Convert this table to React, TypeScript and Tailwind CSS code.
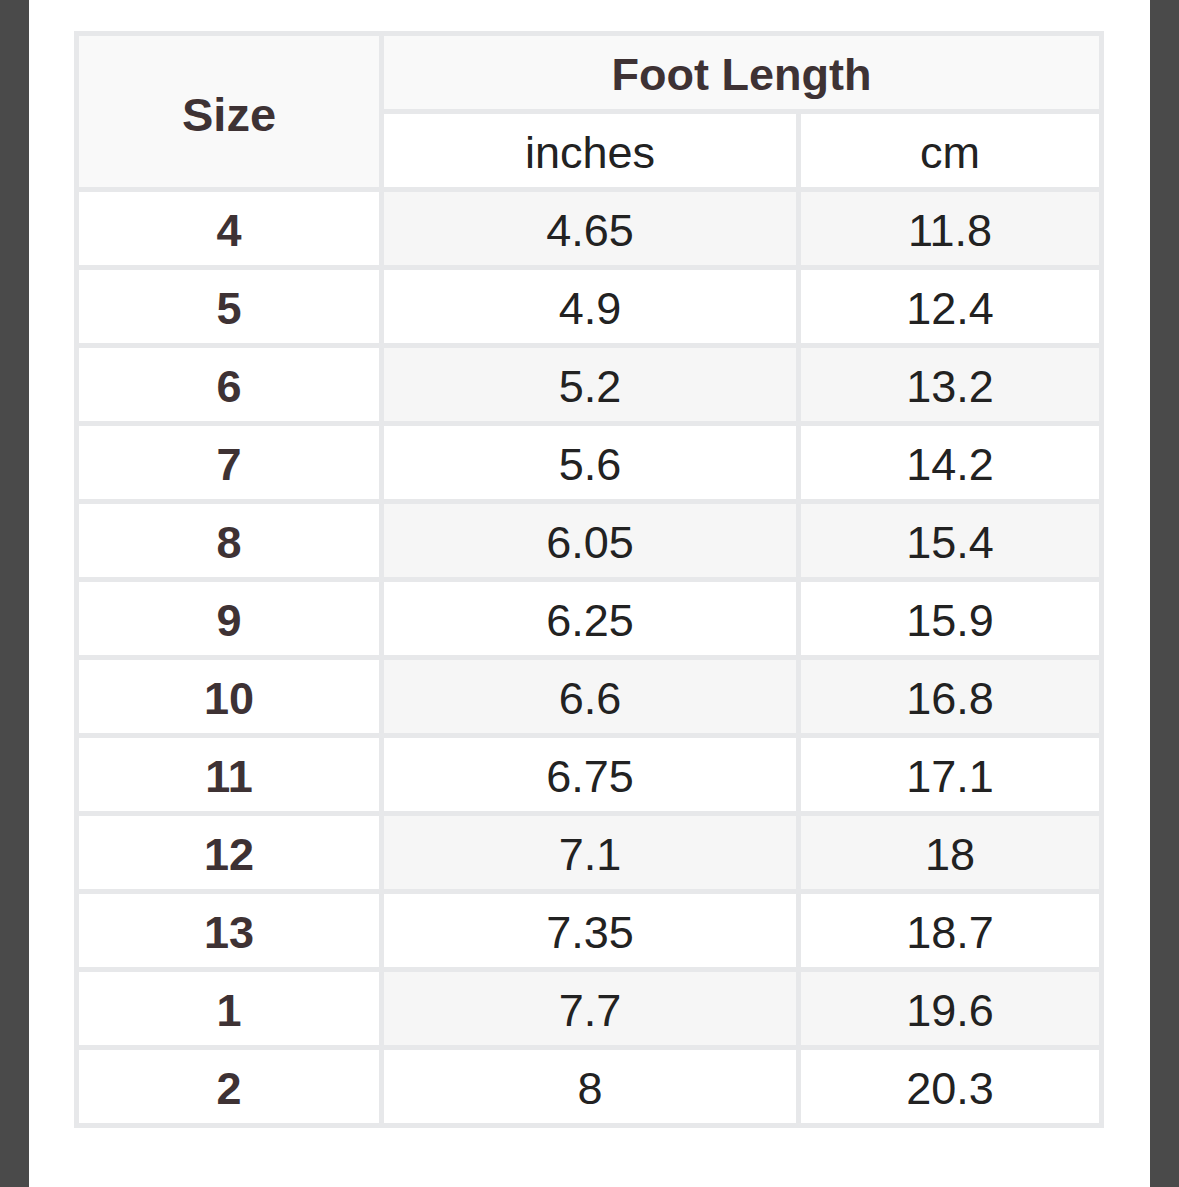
const rows: [string, string, string][] = [
  ["4", "4.65", "11.8"],
  ["5", "4.9", "12.4"],
  ["6", "5.2", "13.2"],
  ["7", "5.6", "14.2"],
  ["8", "6.05", "15.4"],
  ["9", "6.25", "15.9"],
  ["10", "6.6", "16.8"],
  ["11", "6.75", "17.1"],
  ["12", "7.1", "18"],
  ["13", "7.35", "18.7"],
  ["1", "7.7", "19.6"],
  ["2", "8", "20.3"],
];

const cell = "flex items-center justify-center h-[73px] pt-[3px]";

export default function App() {
  return (
    <div className="flex h-[1187px] w-[1179px] font-['Liberation_Sans',Arial,sans-serif]">
      <div className="w-[29px] bg-[#4a4a4a]" />
      <div className="flex-1 bg-white pl-[45px] pt-[31px]">
        <div className="grid w-[1030px] grid-cols-[300px_412px_298px] gap-[5px] bg-[#e7e8ea] p-[5px] text-[45px] leading-none">
          <div className="row-span-2 flex items-center justify-center bg-[#f9f9f9] pt-[6px] text-[47px] font-bold text-[#3e3234]">
            Size
          </div>
          <div className={`${cell} col-span-2 bg-[#f9f9f9] font-bold text-[#3e3234]`}>
            Foot Length
          </div>
          <div className={`${cell} bg-white text-[#222]`}>inches</div>
          <div className={`${cell} bg-white text-[#222]`}>cm</div>
          {rows.map((r, i) => (
            <div key={r[0] + i} className="contents">
              <div className={`${cell} bg-white font-bold text-[#3e3234]`}>{r[0]}</div>
              <div className={`${cell} text-[#222] ${i % 2 === 0 ? "bg-[#f6f6f6]" : "bg-white"}`}>
                {r[1]}
              </div>
              <div className={`${cell} text-[#222] ${i % 2 === 0 ? "bg-[#f6f6f6]" : "bg-white"}`}>
                {r[2]}
              </div>
            </div>
          ))}
        </div>
      </div>
      <div className="w-[29px] bg-[#4a4a4a]" />
    </div>
  );
}
